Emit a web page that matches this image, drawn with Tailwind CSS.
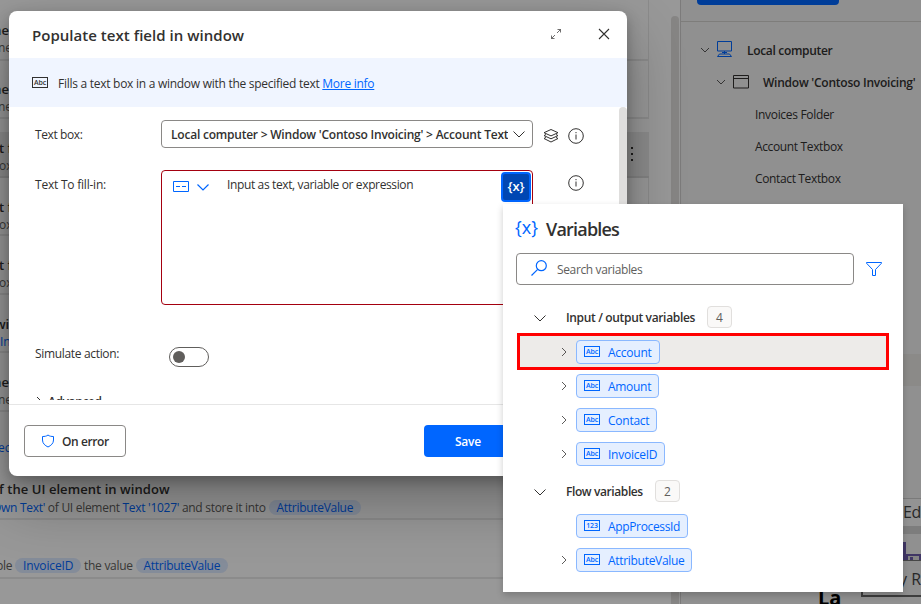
<!DOCTYPE html>
<html lang="en">
<head>
    <meta charset="UTF-8">
    <meta name="viewport" content="width=device-width, initial-scale=1.0">
    <title>Populate text field in window</title>
    <script src="https://cdn.jsdelivr.net/npm/@tailwindcss/browser@4"></script>
</head>

<body class="relative w-[921px] h-[604px] overflow-hidden bg-white font-['Open_Sans','Noto_Sans',sans-serif] text-xs text-[#323130]">

    <!-- Flow designer behind the dialog -->
    <div class="flex h-full">
        <div class="flex w-[680px] justify-between bg-[#fdfdfd]">
            <div class="w-[649px] whitespace-nowrap">
                <div class="h-[60.5px] pt-5 border-b-2 border-r border-[#e8e8e8]"><p class="-ml-[11px] text-[13px] leading-5 font-semibold">me</p><p class="-ml-0.5 leading-4 text-[#605e5c]">ne</p></div>
                <div class="h-[58.6px] pt-[18px] border-b-2 border-r border-[#e8e8e8]"><p class="-ml-[11px] text-[13px] leading-5 font-semibold">me</p><p class="-ml-0.5 leading-4 text-[#605e5c]">ne</p></div>
                <div class="flex flex-col h-[58.6px] pt-[13px] border-b-2 border-[#dadada]">
                    <div class="relative h-[45px] bg-[#e9e9e9] pt-1.5"><p class="-ml-px text-[13px] leading-5 font-semibold">t f</p><p class="-ml-px leading-4 text-[#605e5c]">ox</p>
                        <div class="absolute left-[631px] top-[15px] flex flex-col gap-1"><i class="size-0.5 bg-[#323130]"></i><i class="size-0.5 bg-[#323130]"></i><i class="size-0.5 bg-[#323130]"></i></div>
                    </div>
                </div>
                <div class="h-[58.6px] pt-[19px] border-b-2 border-r border-[#e8e8e8]"><p class="-ml-px text-[13px] leading-5 font-semibold">t f</p><p class="-ml-px leading-4 text-[#605e5c]">ox</p></div>
                <div class="h-[58.6px] pt-[19px] border-b-2 border-[#e8e8e8]"><p class="-ml-px text-[13px] leading-5 font-semibold">t f</p><p class="-ml-px leading-4 text-[#605e5c]">ox</p></div>
                <div class="h-[58.6px] pt-[19px] border-b-2 border-[#e8e8e8]"><p class="-ml-[5px] text-[13px] leading-5 font-semibold">wi</p><p class="leading-4 text-[#0066ff]">In</p></div>
                <div class="h-[58.6px] pt-[19px] border-b-2 border-[#e8e8e8]"><p class="-ml-[11px] text-[13px] leading-5 font-semibold">me</p><p class="-ml-0.5 leading-4 text-[#605e5c]">ne</p></div>
                <div class="h-[49.4px] pt-[28px]"><p class="-ml-0.5 leading-4 text-[#0066ff]">ec</p></div>
                <div class="h-[58.6px] pt-[18px] border-b-2 border-[#e8e8e8]">
                    <p class="-ml-px text-[13px] leading-5 font-semibold tracking-[0.06px]">f the UI element in window</p>
                    <p class="-ml-2 leading-[17px] tracking-[-0.29px] text-[#605e5c]"><span class="text-[#0066ff]">Own Text'</span> of UI element <span class="text-[#0066ff]">Text '1027'</span> and store it into <span class="inline-block h-[15px] leading-[15px] rounded-full bg-[#dde9ff] px-2 text-[#0066ff] tracking-[-0.3px]">AttributeValue</span></p>
                </div>
                <div class="h-[59px] pt-[37px] border-b-2 border-[#e8e8e8]">
                    <p class="-ml-1 leading-[17px] tracking-[-0.29px] text-[#605e5c]">ble <span class="inline-block h-[15px] leading-[15px] rounded-full bg-[#dde9ff] px-2 text-[#0066ff] tracking-[-0.15px]">InvoiceID</span> the value <span class="inline-block h-[15px] leading-[15px] rounded-full bg-[#dde9ff] px-2 text-[#0066ff] tracking-[-0.3px]">AttributeValue</span></p>
                </div>
            </div>
            <div class="mt-4 mr-[1px] w-2 rounded-t-full bg-[#dfdedc]"></div>
        </div>

        <!-- UI elements pane -->
        <div class="flex flex-col w-[241px] border-l border-[#cfcecd] bg-[#f0f0f0] whitespace-nowrap">
            <div class="h-[22px] border-b border-[#d2d0ce] pl-4"><div class="h-[5px] w-[142px] rounded-b-sm bg-[#0066ff]"></div></div>
            <div class="flex items-center h-8 mt-[13px] pl-[19px]">
                <svg class="w-2.5 h-2.5 mb-0.5" viewBox="0 0 10 10" fill="none" stroke="#323130" stroke-width=".8"><path d="M1 3l4 4 4-4"/></svg>
                <svg class="ml-[7px] w-4 h-4 mb-1" viewBox="0 0 16 16" fill="none" stroke="#0066ff"><path d="M.5 .5h14v9.500H.5zM7.500 10v3M5 11.500h5M2.500 13h10l2 2.500H.5z"/></svg>
                <p class="ml-[14px] font-semibold tracking-[-0.32px]">Local computer</p>
            </div>
            <div class="flex items-center h-8 pl-[35px]">
                <svg class="w-2.5 h-2.5 mb-0.5" viewBox="0 0 10 10" fill="none" stroke="#323130" stroke-width=".8"><path d="M1 3l4 4 4-4"/></svg>
                <svg class="ml-[7px] w-4 h-[14px] mb-0.5" viewBox="0 0 16 14" fill="none" stroke="#323130"><path d="M.5 .5h15v12.500H.5zM.5 3.500h15"/></svg>
                <p class="ml-[14px] font-semibold tracking-[-0.24px]">Window 'Contoso Invoicing'</p>
            </div>
            <p class="h-8 pl-[74px] leading-8 tracking-[-0.32px]">Invoices Folder</p>
            <p class="h-8 pl-[74px] leading-8 tracking-[-0.36px]">Account Textbox</p>
            <p class="h-8 pl-[74px] leading-8 tracking-[-0.36px]">Contact Textbox</p>
            <div class="mt-[159px] h-8 bg-[#e8e6e3]"></div>
            <!-- screenshot preview at the bottom of the pane -->
            <div class="mt-[112px] flex flex-col items-end text-[#444]">
                <div class="w-5 h-[28px] border-t border-[#ccc] bg-[#f6f6f6] pl-0.5 text-base leading-[27px] tracking-tight">Ed</div>
                <div class="w-5 h-[8px] bg-[#d0d0d0]"></div>
                <div class="w-5 h-[27px] pt-2 border-b-2 border-[#777]"><svg class="w-5 h-[18px]" viewBox="0 0 20 18"><path d="M2 0h3v12h15v6H2z" fill="#6b5aa8"/><path d="M7 14h11v4H7z" fill="#ddd"/><path d="M9 15h3v3H9z" fill="#6b5aa8"/></svg></div>
                <div class="w-[60px] h-[36px] border-l-2 border-b-2 border-[#666] bg-[#eee] text-right text-base leading-[36px]">y R</div>
            </div>
        </div>
    </div>
    <div class="absolute left-[818px] top-[588px] font-bold text-xl leading-5 text-black">La</div>
    <div class="absolute inset-0 bg-black/40"></div>

    <!-- Action dialog -->
    <div class="absolute left-[9px] top-[11px] flex flex-col w-[618px] h-[465px] rounded-lg bg-white overflow-hidden shadow-[0_26px_58px_rgba(0,0,0,0.3),0_5px_14px_rgba(0,0,0,0.25)]">
        <div class="flex items-center h-[47px] pl-[23px] pr-[17px]">
            <p class="flex-1 text-[15px] font-semibold tracking-[0.03px]">Populate text field in window</p>
            <svg class="w-2.5 h-2.5 mb-0.5" viewBox="0 0 10 10" fill="none" stroke="#323130"><path d="M6 4L9.500 .5M6.500 .5h3v3M4 6L.5 9.500M.5 6.500v3h3" stroke-width=".7"/></svg>
            <svg class="ml-[37px] w-3 h-3 mb-0.5" viewBox="0 0 12 12" fill="none" stroke="#323130" stroke-width="1.100"><path d="M1 1l10 10M11 1L1 11"/></svg>
        </div>
        <div class="flex items-center h-[49px] bg-[#f0f5ff] pl-[23px]">
            <div class="flex items-center justify-center w-4 h-[11px] border border-[#323130] text-[7px] font-semibold leading-none tracking-[-0.2px]">Abc</div>
            <p class="ml-[10px] pt-0.5 tracking-[-0.27px]">Fills a text box in a window with the specified text <a class="text-[#0066ff] underline" href="#">More info</a></p>
        </div>
        <div class="flex h-[293px] overflow-hidden">
            <div class="flex-1 pl-[26px]">
                <div class="flex items-center h-7 mt-[13px]">
                    <p class="w-[126px] pt-0.5 tracking-[-0.4px]">Text box:</p>
                    <div class="flex items-center w-[372px] h-7 border border-[#8a8886] rounded-sm pl-[9px] pr-[7px]">
                        <p class="w-[337px] pt-px overflow-hidden whitespace-nowrap font-semibold tracking-[-0.22px]">Local computer &gt; Window 'Contoso Invoicing' &gt; Account Textbox</p>
                        <svg class="ml-[5px] w-3 h-3 shrink-0" viewBox="0 0 12 12" fill="none" stroke="#323130"><path d="M.5 3.500L6 9l5.500-5.500"/></svg>
                    </div>
                    <svg class="ml-[10px] mt-1 w-4 h-4" viewBox="0 0 16 16" fill="none" stroke="#323130"><path d="M8 1.500l7 3.200-7 3.200L1 4.700zM3 6.500L1 7.600l7 3.200 7-3.200-2-1.100M3 9.400L1 10.500l7 3.500 7-3.500-2-1.100"/></svg>
                    <svg class="ml-[9px] mt-[3px] w-4 h-4" viewBox="0 0 16 16" fill="none" stroke="#323130"><circle cx="8" cy="8" r="7.300"/><path d="M8 6.500v5M8 4v1.200"/></svg>
                </div>
                <div class="flex mt-[22px] h-[135px]">
                    <p class="w-[126px] pt-[7px] tracking-[-0.22px]">Text To fill-in:</p>
                    <div class="flex w-[372px] border border-[#a4000f] rounded-sm pl-[11px] pt-px">
                        <svg class="mt-[9px] w-4 h-[11px]" viewBox="0 0 16 11" fill="none" stroke="#0066ff"><path d="M.5 .5h15v10H.5zM3 5.500h4M9 5.500h4"/></svg>
                        <svg class="ml-2 mt-[9px] w-3 h-3" viewBox="0 0 12 12" fill="none" stroke="#0066ff" stroke-width="1.200"><path d="M.5 3.500L6 9l5.500-5.500"/></svg>
                        <p class="ml-[18px] mt-[5px] flex-1 tracking-[-0.37px]">Input as text, variable or expression</p>
                        <div class="mr-px flex items-center justify-center w-[30px] h-[30px] rounded-sm border-2 border-[#0066ff] bg-[#0047b3] font-semibold text-[13px] text-white">{x}</div>
                    </div>
                    <svg class="ml-[35px] mt-[5px] w-4 h-4" viewBox="0 0 16 16" fill="none" stroke="#323130"><circle cx="8" cy="8" r="7.300"/><path d="M8 6.500v5M8 4v1.200"/></svg>
                </div>
                <div class="flex mt-[41px] h-5">
                    <p class="w-[134px] leading-4 tracking-[-0.33px]">Simulate action:</p>
                    <div class="mt-px flex items-center w-10 h-5 rounded-full border border-[#605e5c] pl-[3px]"><div class="size-3 rounded-full bg-[#605e5c]"></div></div>
                </div>
                <div class="flex items-center mt-[25px] h-5">
                    <svg class="w-2 h-2" viewBox="0 0 8 8" fill="none" stroke="#323130"><path d="M2 0l4 4-4 4"/></svg>
                    <p class="ml-[5px] pt-0.5 font-semibold tracking-[-0.4px]">Advanced</p>
                </div>
            </div>
            <div class="w-2 rounded-t-full bg-[#dfdedd]"></div>
        </div>
        <div class="mt-1 flex items-start justify-between h-[72px] border-t border-[#e6e6e6] px-[15px] pt-5">
            <button class="flex items-center w-[102px] h-8 border border-[#8a8886] rounded-sm pl-4 font-semibold tracking-[-0.4px]">
                <svg class="w-3.5 h-3.5 mb-px" viewBox="0 0 14 14" fill="none" stroke="#0066ff"><path d="M7 1C5.500 2.300 3.500 2.500 1.500 2.500V6c0 3.500 2.500 5.500 5.500 7 3-1.500 5.500-3.500 5.500-7V2.500C10.500 2.500 8.500 2.300 7 1z"/></svg>
                <span class="ml-[7px] pt-0.5">On error</span>
            </button>
            <div class="flex gap-2">
                <button class="w-[88px] h-8 pt-0.5 rounded-sm bg-[#0066ff] font-semibold text-white tracking-[-0.2px]">Save</button>
                <button class="w-[92px] h-8 rounded-sm border border-[#8a8886] font-semibold">Cancel</button>
            </div>
        </div>
    </div>

    <!-- Variables picker -->
    <div class="absolute left-[503px] top-[204px] w-[400px] h-[388px] bg-white shadow-[0_3px_7px_rgba(0,0,0,0.2)]">
        <div class="flex items-center h-[49px] pl-3">
            <p class="w-[31px] text-lg leading-none text-[#0066ff] pb-1">{x}</p>
            <p class="pt-px text-lg leading-none font-semibold tracking-[-0.8px]">Variables</p>
        </div>
        <div class="flex items-center h-8 pl-[13px]">
            <div class="flex items-center w-[338px] h-8 border border-[#8a8886] rounded-sm pl-[14px]">
                <svg class="w-4 h-4 mb-0.5" viewBox="0 0 16 16" fill="none" stroke="#0066ff" stroke-width="1.200"><circle cx="10.300" cy="5.700" r="5"/><path d="M6.700 9.300L.5 15.500"/></svg>
                <p class="ml-[10px] pt-0.5 tracking-[-0.37px] text-[#605e5c]">Search variables</p>
            </div>
            <svg class="ml-3 w-4 h-[14px]" viewBox="0 0 16 14" fill="none" stroke="#0066ff"><path d="M.5 .5h15v.7L9.500 7.500v6h-3v-6L.5 1.200z"/></svg>
        </div>
        <div class="flex items-center h-[22px] mt-[21px] pl-[31px]">
            <svg class="mt-0.5 w-3 h-3" viewBox="0 0 12 12" fill="none" stroke="#323130"><path d="M.5 3.500L6 9l5.500-5.500"/></svg>
            <p class="ml-5 w-[141px] pt-0.5 font-semibold tracking-[-0.34px] whitespace-nowrap">Input / output variables</p>
            <div class="w-[25px] h-[22px] rounded-sm border border-[#e1dfdd] bg-[#faf9f8] text-center leading-[22px] text-[#605e5c]">4</div>
        </div>
        <div class="flex items-center h-[37px] w-[372px] mt-[5px] ml-3.5 border-3 border-[#ff0000] bg-[#edebe9] pt-px pl-10">
            <svg class="w-2 h-2" viewBox="0 0 8 8" fill="none" stroke="#323130" stroke-width=".8"><path d="M2 0l4 4-4 4"/></svg>
            <div class="ml-2 flex items-center w-[84px] h-6 pt-0.5 rounded-sm border border-[#8ab8ff] bg-[#e5efff] pl-[7px] text-[#0066ff] tracking-[-0.25px]"><span class="mr-2 mb-[3px] flex items-center justify-center w-4 h-[11px] border border-[#0066ff] text-[7px] font-semibold tracking-[-0.2px]">Abc</span>Account</div>
        </div>
        <div class="flex flex-col gap-2.5 mt-1 pl-[57px]">
            <div class="flex items-center">
                <svg class="w-2 h-2" viewBox="0 0 8 8" fill="none" stroke="#323130" stroke-width=".8"><path d="M2 0l4 4-4 4"/></svg>
                <div class="ml-2 flex items-center w-[83px] h-6 pt-0.5 rounded-sm border border-[#8ab8ff] bg-[#e5efff] pl-[7px] text-[#0066ff] tracking-[-0.3px]"><span class="mr-2 mb-[3px] flex items-center justify-center w-4 h-[11px] border border-[#0066ff] text-[7px] font-semibold tracking-[-0.2px]">Abc</span>Amount</div>
            </div>
            <div class="flex items-center">
                <svg class="w-2 h-2" viewBox="0 0 8 8" fill="none" stroke="#323130" stroke-width=".8"><path d="M2 0l4 4-4 4"/></svg>
                <div class="ml-2 flex items-center w-[81px] h-6 pt-0.5 rounded-sm border border-[#8ab8ff] bg-[#e5efff] pl-[7px] text-[#0066ff] tracking-[-0.25px]"><span class="mr-2 mb-[3px] flex items-center justify-center w-4 h-[11px] border border-[#0066ff] text-[7px] font-semibold tracking-[-0.2px]">Abc</span>Contact</div>
            </div>
            <div class="flex items-center">
                <svg class="w-2 h-2" viewBox="0 0 8 8" fill="none" stroke="#323130" stroke-width=".8"><path d="M2 0l4 4-4 4"/></svg>
                <div class="ml-2 flex items-center w-[89px] h-6 pt-0.5 rounded-sm border border-[#8ab8ff] bg-[#e5efff] pl-[7px] text-[#0066ff] tracking-[-0.25px]"><span class="mr-2 mb-[3px] flex items-center justify-center w-4 h-[11px] border border-[#0066ff] text-[7px] font-semibold tracking-[-0.2px]">Abc</span>InvoiceID</div>
            </div>
        </div>
        <div class="flex items-center h-[22px] mt-[14px] pl-[31px]">
            <svg class="mt-0.5 w-3 h-3" viewBox="0 0 12 12" fill="none" stroke="#323130"><path d="M.5 3.500L6 9l5.500-5.500"/></svg>
            <p class="ml-5 w-[89px] pt-0.5 font-semibold tracking-[-0.4px] whitespace-nowrap">Flow variables</p>
            <div class="w-[25px] h-[22px] rounded-sm border border-[#e1dfdd] bg-[#faf9f8] text-center leading-[22px] text-[#605e5c]">2</div>
        </div>
        <div class="flex flex-col gap-2.5 mt-3 pl-[57px]">
            <div class="ml-4 flex items-center w-[112px] h-6 pt-0.5 rounded-sm border border-[#8ab8ff] bg-[#e5efff] pl-[7px] text-[#0066ff] tracking-[-0.35px]"><span class="mr-2 mb-[3px] flex items-center justify-center w-4 h-[11px] border border-[#0066ff] text-[7px] font-semibold tracking-[-0.2px]">123</span>AppProcessId</div>
            <div class="flex items-center">
                <svg class="w-2 h-2" viewBox="0 0 8 8" fill="none" stroke="#323130" stroke-width=".8"><path d="M2 0l4 4-4 4"/></svg>
                <div class="ml-2 flex items-center w-[116px] h-6 pt-0.5 rounded-sm border border-[#8ab8ff] bg-[#e5efff] pl-[7px] text-[#0066ff] tracking-[-0.3px]"><span class="mr-2 mb-[3px] flex items-center justify-center w-4 h-[11px] border border-[#0066ff] text-[7px] font-semibold tracking-[-0.2px]">Abc</span>AttributeValue</div>
            </div>
        </div>
    </div>
</body>
</html>
